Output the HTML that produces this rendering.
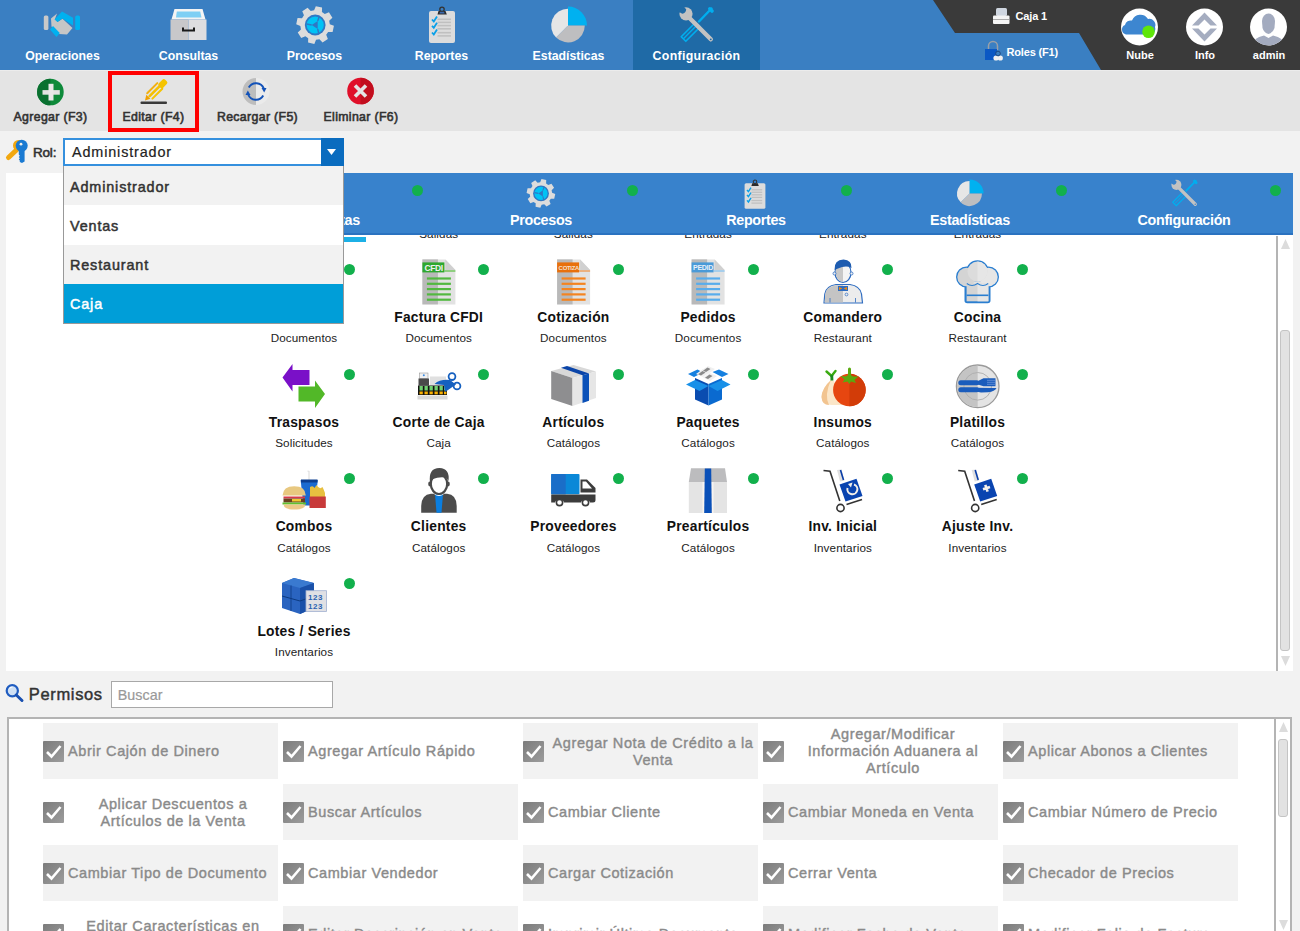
<!DOCTYPE html>
<html><head><meta charset="utf-8">
<style>
*{box-sizing:border-box;margin:0;padding:0}
html,body{width:1300px;height:931px;overflow:hidden;background:#f2f2f2;font-family:"Liberation Sans",sans-serif;position:relative}
.a{position:absolute}
svg{position:absolute;overflow:visible}
.tb{position:absolute;left:0;top:0;width:1300px;height:70px;background:#3a7fc2}
.tl{position:absolute;top:49.2px;color:#fff;font-weight:bold;font-size:12.3px;letter-spacing:0px;text-align:center;white-space:nowrap;line-height:14px}
.tbar{position:absolute;left:0;top:70px;width:1300px;height:61px;background:#e4e4e4;border-top:1px solid #ececec}
.bl{position:absolute;top:109.7px;color:#333;font-weight:normal;-webkit-text-stroke:0.6px #333;font-size:12.3px;letter-spacing:0.35px;white-space:nowrap;text-align:center;line-height:14px}
.panel{position:absolute;left:6px;top:173px;width:1287px;height:498px;background:#fff;overflow:hidden}
.inner{position:absolute;left:-6px;top:-173px;width:1300px;height:931px}
.nav{position:absolute;left:63px;top:173px;width:1230px;height:62px;background:#3882cc;border-bottom:2px solid #2a72c0}
.nl{position:absolute;top:211.7px;color:#fff;font-weight:bold;font-size:14.3px;letter-spacing:-0.3px;white-space:nowrap;text-align:center;line-height:16px;width:200px}
.dot{position:absolute;width:11px;height:11px;border-radius:50%;background:#12b04c}
.t{position:absolute;width:200px;text-align:center;font-weight:bold;font-size:13.8px;letter-spacing:0.25px;color:#111;line-height:15px;white-space:nowrap}
.s{position:absolute;width:200px;text-align:center;font-size:11.7px;letter-spacing:0.1px;color:#222;line-height:14px;white-space:nowrap}
.perm{position:absolute;left:7px;top:717px;width:1285px;height:240px;background:#fff;border:2px solid #b4b4b4;overflow:hidden}
.pinner{position:absolute;left:-9px;top:-719px;width:1300px;height:931px}
.cell{position:absolute;width:235px;height:56px}
.cell.g{background:#f2f2f2}
.cb{position:absolute;left:0;top:18px;width:21px;height:21px;background:linear-gradient(135deg,#7c7c7c,#9c9c9c);border-radius:1px}
.ct{position:absolute;left:25px;right:0;top:0;height:56px;display:flex;align-items:center;justify-content:center;text-align:center;color:#8a8a8a;font-weight:normal;-webkit-text-stroke:0.4px #8a8a8a;font-size:14.5px;letter-spacing:0.58px;line-height:17px;padding-top:1px;white-space:nowrap}
.ct.l{justify-content:flex-start;text-align:left}
.sbl{position:absolute;width:2px;background:#b4b4b4}
.thumb{position:absolute;width:10px;border:1px solid #c4c4c4;background:#e2e2e2;border-radius:3px}

.wbg{fill:var(--wbg,#1f6aa6)}

</style></head><body>
<!-- top bar -->
<div class="tb"></div>
<div class="a" style="left:633px;top:0;width:127px;height:70px;background:#1f6aa6"></div>
<svg style="left:0;top:0" width="1300" height="70"><polygon points="933,0 1300,0 1300,70 1101,70 1079,33 955,33" fill="#3a3a3a"/></svg>
<div class="tl" style="left:0;width:125px">Operaciones</div>
<div class="tl" style="left:126px;width:125px">Consultas</div>
<div class="tl" style="left:252px;width:125px">Procesos</div>
<div class="tl" style="left:379px;width:125px">Reportes</div>
<div class="tl" style="left:506px;width:125px">Estadísticas</div>
<div class="tl" style="left:633px;width:127px;letter-spacing:0.35px">Configuración</div>
<div class="a" style="left:1015.5px;top:10.2px;color:#fff;font-weight:bold;font-size:11px;letter-spacing:-0.15px;line-height:13px">Caja 1</div>
<div class="a" style="left:1006.5px;top:45.7px;color:#fff;font-weight:bold;font-size:11px;letter-spacing:-0.17px;line-height:13px">Roles (F1)</div>
<div class="tl" style="left:1110px;width:60px;font-size:11px;top:48.7px;line-height:13px">Nube</div>
<div class="tl" style="left:1175px;width:60px;font-size:11px;top:48.7px;line-height:13px">Info</div>
<div class="tl" style="left:1239px;width:60px;font-size:11px;top:48.7px;line-height:13px">admin</div>

<!-- toolbar -->
<div class="tbar"></div>
<div class="a" style="left:108px;top:71px;width:91px;height:61px;border:4px solid #f00"></div>
<div class="bl" style="left:0;width:101px">Agregar (F3)</div>
<div class="bl" style="left:104px;width:99px">Editar (F4)</div>
<div class="bl" style="left:207px;width:101px">Recargar (F5)</div>
<div class="bl" style="left:311px;width:100px">Eliminar (F6)</div>

<!-- rol -->
<div class="a" style="left:33px;top:144.5px;font-weight:normal;-webkit-text-stroke:0.6px #333;font-size:13.5px;letter-spacing:-0.2px;color:#333;line-height:15px">Rol:</div>

<!-- upper panel -->
<div class="panel"><div class="inner">
<div class="t" style="left:204.0px;top:205.3px"></div><div class="s" style="left:204.0px;top:226.8px">Salidas</div>
<div class="dot" style="left:343.5px;top:159.5px"></div>
<div class="t" style="left:338.7px;top:205.3px"></div><div class="s" style="left:338.7px;top:226.8px">Salidas</div>
<div class="dot" style="left:478.2px;top:159.5px"></div>
<div class="t" style="left:473.4px;top:205.3px"></div><div class="s" style="left:473.4px;top:226.8px">Salidas</div>
<div class="dot" style="left:612.9px;top:159.5px"></div>
<div class="t" style="left:608.1px;top:205.3px"></div><div class="s" style="left:608.1px;top:226.8px">Entradas</div>
<div class="dot" style="left:747.6px;top:159.5px"></div>
<div class="t" style="left:742.8px;top:205.3px"></div><div class="s" style="left:742.8px;top:226.8px">Entradas</div>
<div class="dot" style="left:882.3px;top:159.5px"></div>
<div class="t" style="left:877.5px;top:205.3px"></div><div class="s" style="left:877.5px;top:226.8px">Entradas</div>
<div class="dot" style="left:1017.0px;top:159.5px"></div>
<div class="t" style="left:204.0px;top:309.7px">Ventas</div><div class="s" style="left:204.0px;top:331.2px">Documentos</div>
<div class="dot" style="left:343.5px;top:263.9px"></div>
<div class="t" style="left:338.7px;top:309.7px">Factura CFDI</div><div class="s" style="left:338.7px;top:331.2px">Documentos</div>
<div class="dot" style="left:478.2px;top:263.9px"></div>
<div class="t" style="left:473.4px;top:309.7px">Cotización</div><div class="s" style="left:473.4px;top:331.2px">Documentos</div>
<div class="dot" style="left:612.9px;top:263.9px"></div>
<div class="t" style="left:608.1px;top:309.7px">Pedidos</div><div class="s" style="left:608.1px;top:331.2px">Documentos</div>
<div class="dot" style="left:747.6px;top:263.9px"></div>
<div class="t" style="left:742.8px;top:309.7px">Comandero</div><div class="s" style="left:742.8px;top:331.2px">Restaurant</div>
<div class="dot" style="left:882.3px;top:263.9px"></div>
<div class="t" style="left:877.5px;top:309.7px">Cocina</div><div class="s" style="left:877.5px;top:331.2px">Restaurant</div>
<div class="dot" style="left:1017.0px;top:263.9px"></div>
<div class="t" style="left:204.0px;top:414.5px">Traspasos</div><div class="s" style="left:204.0px;top:436.1px">Solicitudes</div>
<div class="dot" style="left:343.5px;top:368.7px"></div>
<div class="t" style="left:338.7px;top:414.5px">Corte de Caja</div><div class="s" style="left:338.7px;top:436.1px">Caja</div>
<div class="dot" style="left:478.2px;top:368.7px"></div>
<div class="t" style="left:473.4px;top:414.5px">Artículos</div><div class="s" style="left:473.4px;top:436.1px">Catálogos</div>
<div class="dot" style="left:612.9px;top:368.7px"></div>
<div class="t" style="left:608.1px;top:414.5px">Paquetes</div><div class="s" style="left:608.1px;top:436.1px">Catálogos</div>
<div class="dot" style="left:747.6px;top:368.7px"></div>
<div class="t" style="left:742.8px;top:414.5px">Insumos</div><div class="s" style="left:742.8px;top:436.1px">Catálogos</div>
<div class="dot" style="left:882.3px;top:368.7px"></div>
<div class="t" style="left:877.5px;top:414.5px">Platillos</div><div class="s" style="left:877.5px;top:436.1px">Catálogos</div>
<div class="dot" style="left:1017.0px;top:368.7px"></div>
<div class="t" style="left:204.0px;top:519.1px">Combos</div><div class="s" style="left:204.0px;top:540.6px">Catálogos</div>
<div class="dot" style="left:343.5px;top:473.3px"></div>
<div class="t" style="left:338.7px;top:519.1px">Clientes</div><div class="s" style="left:338.7px;top:540.6px">Catálogos</div>
<div class="dot" style="left:478.2px;top:473.3px"></div>
<div class="t" style="left:473.4px;top:519.1px">Proveedores</div><div class="s" style="left:473.4px;top:540.6px">Catálogos</div>
<div class="dot" style="left:612.9px;top:473.3px"></div>
<div class="t" style="left:608.1px;top:519.1px">Preartículos</div><div class="s" style="left:608.1px;top:540.6px">Catálogos</div>
<div class="dot" style="left:747.6px;top:473.3px"></div>
<div class="t" style="left:742.8px;top:519.1px">Inv. Inicial</div><div class="s" style="left:742.8px;top:540.6px">Inventarios</div>
<div class="dot" style="left:882.3px;top:473.3px"></div>
<div class="t" style="left:877.5px;top:519.1px">Ajuste Inv.</div><div class="s" style="left:877.5px;top:540.6px">Inventarios</div>
<div class="dot" style="left:1017.0px;top:473.3px"></div>
<div class="t" style="left:204.0px;top:623.6px">Lotes / Series</div><div class="s" style="left:204.0px;top:645.1px">Inventarios</div>
<div class="dot" style="left:343.5px;top:577.8px"></div>
<svg style="left:0;top:0" width="1300" height="700">
<defs>
 <g id="doc">
  <!-- doc at 0,0 size 33x45 -->
  <path d="M0 0 L23 0 L33 10.5 L33 45 L0 45 Z" fill="#e2e2e2"/>
  <rect x="0" y="0" width="15.5" height="45" fill="#b9b9b9"/>
  <path d="M23 0 L33 10.5 L23 10.5 Z" fill="#d0d0d0"/>
 </g>
</defs>
<!-- CFDI -->
<g transform="translate(422.4 259.4)">
 <use href="#doc"/>
 <rect x="0" y="3" width="22" height="10" fill="#2ea82e"/>
 <rect x="22" y="11" width="11" height="1.2" fill="#58c040"/>
 <text x="2" y="11.6" font-family="Liberation Sans" font-weight="bold" font-size="8.5" fill="#f0f0f0" letter-spacing="-0.4">CFDI</text>
 <g fill="#52b840"><rect x="4.5" y="18" width="24" height="2.2"/><rect x="4.5" y="23.3" width="24" height="2.2"/><rect x="4.5" y="28.6" width="24" height="2.2"/><rect x="4.5" y="33.9" width="24" height="2.2"/><rect x="4.5" y="39.2" width="24" height="2.2"/></g>
</g>
<!-- COTIZA -->
<g transform="translate(557.1 259.4)">
 <use href="#doc"/>
 <rect x="0" y="3" width="22" height="10" fill="#e8700c"/>
 <rect x="22" y="11" width="11" height="1.2" fill="#f09040"/>
 <text x="1.5" y="10.8" font-family="Liberation Sans" font-weight="bold" font-size="6" fill="#f4e0d0" letter-spacing="-0.3">COTIZA</text>
 <g fill="#f48420"><rect x="4.5" y="18" width="24" height="2.2"/><rect x="4.5" y="23.3" width="24" height="2.2"/><rect x="4.5" y="28.6" width="24" height="2.2"/><rect x="4.5" y="33.9" width="24" height="2.2"/><rect x="4.5" y="39.2" width="24" height="2.2"/></g>
</g>
<!-- PEDIDO -->
<g transform="translate(691.6 259.4)">
 <use href="#doc"/>
 <rect x="0" y="3" width="22" height="10" fill="#4a9ad8"/>
 <rect x="22" y="11" width="11" height="1.2" fill="#80c0f0"/>
 <text x="1.5" y="11" font-family="Liberation Sans" font-weight="bold" font-size="7" fill="#e8f0f8" letter-spacing="-0.3">PEDID</text>
 <g fill="#58acec"><rect x="4.5" y="18" width="24" height="2.2"/><rect x="4.5" y="23.3" width="24" height="2.2"/><rect x="4.5" y="28.6" width="24" height="2.2"/><rect x="4.5" y="33.9" width="24" height="2.2"/><rect x="4.5" y="39.2" width="24" height="2.2"/></g>
</g>
<!-- Comandero -->
<g>
 <path d="M824 303 L824.8 294 Q826 286 836 284.5 L850 284.5 Q860 286 861.5 294 L862.5 303 Z" fill="#ececec" stroke="#2e6cc0" stroke-width="1.2"/>
 <path d="M824.6 302.4 L825.3 294 Q826.5 286.8 836 285.2 L843 285.2 L843 302.4 Z" fill="#c4c4c4"/>
 <ellipse cx="843" cy="272.5" rx="8" ry="10" fill="#f4f4f4" stroke="#2e6cc0" stroke-width="1.2"/>
 <path d="M835.6 272.5 A7.4 9.4 0 0 1 843 263 L843 282 A7.4 9.4 0 0 1 835.6 272.5 Z" fill="#c8c8c8"/>
 <path d="M834.5 270 Q834 259.5 843.5 259.5 Q852 260 851.5 268 Q846 265 838 268.5 Z" fill="#1e5cb0"/>
 <circle cx="834.5" cy="273.5" r="1.5" fill="#f0f0f0" stroke="#2e6cc0" stroke-width="0.8"/>
 <circle cx="851.5" cy="273.5" r="1.5" fill="#f0f0f0" stroke="#2e6cc0" stroke-width="0.8"/>
 <rect x="838" y="286" width="10" height="5" fill="#2e6cc0"/>
 <path d="M839 287 L842.5 288.5 L839 290 Z M847 287 L843.5 288.5 L847 290 Z" fill="#f08a10"/>
 <circle cx="846.5" cy="294.5" r="1.4" fill="none" stroke="#2e6cc0" stroke-width="0.7"/>
 <path d="M830 298 L830 302.5 M855.5 298 L855.5 302.5" stroke="#2e6cc0" stroke-width="0.8"/>
</g>
<!-- Cocina -->
<g stroke="#2a7ed0" stroke-width="2.6">
 <circle cx="966.5" cy="277" r="9.2" fill="#d6d6d6"/>
 <circle cx="988.5" cy="277" r="9.2" fill="#e6e6e6"/>
 <circle cx="977.5" cy="271.5" r="10" fill="#dedede"/>
 <rect x="965.8" y="280" width="23.4" height="22" rx="1.5" fill="#e2e2e2"/>
</g>
<g>
 <circle cx="966.5" cy="277" r="9.2" fill="#d4d4d4"/>
 <circle cx="988.5" cy="277" r="9.2" fill="#e6e6e6"/>
 <circle cx="977.5" cy="271.5" r="10" fill="#dcdcdc"/>
 <path d="M977.5 261.5 A10 10 0 0 1 977.5 281.5 Z" fill="#e6e6e6"/>
 <rect x="966.6" y="283.5" width="21.8" height="17.8" fill="#d4d4d4"/>
 <rect x="977.5" y="283.5" width="10.9" height="17.8" fill="#e6e6e6"/>
 <path d="M966.8 283.5 Q972 287.5 977.5 283.5 Q983 287.5 988.2 283.5" fill="none" stroke="#2a7ed0" stroke-width="1.1"/>
 <rect x="966.6" y="294.5" width="21.8" height="1.6" fill="#2a7ed0"/>
</g>
<!-- Traspasos -->
<path d="M282.5 377.5 L292.5 364 L292.5 370 L309.5 370 L309.5 385 L292.5 385 L292.5 391.5 Z" fill="#7a10c8"/>
<path d="M325 394 L315 380.5 L315 386.5 L298.5 386.5 L298.5 401.5 L315 401.5 L315 408 Z" fill="#52b828"/>
<!-- Corte de caja -->
<g>
 <rect x="430" y="376.5" width="16" height="9" fill="#e0e0e0"/>
 <rect x="419.5" y="373" width="8.5" height="5.5" fill="#f0f0f0" stroke="#888" stroke-width="0.5"/>
 <circle cx="423.8" cy="375.3" r="1" fill="#3a8ae0"/>
 <rect x="418.5" y="378.5" width="10.5" height="7" fill="#4a4a4a"/>
 <rect x="418" y="385.5" width="29" height="9.5" fill="#111"/>
 <g fill="#70d070"><rect x="419.5" y="386" width="3.3" height="4.5"/><rect x="424.5" y="386" width="3.3" height="4.5"/><rect x="429.5" y="386" width="3.3" height="4.5"/><rect x="434.5" y="386" width="3.3" height="4.5"/><rect x="439.5" y="386" width="3.3" height="4.5"/><rect x="444" y="386" width="2.5" height="4.5"/></g>
 <g fill="#f8b000"><rect x="419.5" y="391.5" width="3.3" height="2.8"/><rect x="424.5" y="391.5" width="3.3" height="2.8"/><rect x="429.5" y="391.5" width="3.3" height="2.8"/><rect x="434.5" y="391.5" width="3.3" height="2.8"/><rect x="439.5" y="391.5" width="3.3" height="2.8"/><rect x="444" y="391.5" width="2.5" height="2.8"/></g>
 <rect x="417.5" y="395.5" width="30" height="4" fill="#d8d8d8"/>
 <path d="M434.5 384 Q440 379 450 380 L456 384.5 L448 390 L445 392 L444 385 Z" fill="#1560c0"/>
 <circle cx="452" cy="376.6" r="3.4" fill="none" stroke="#1560c0" stroke-width="1.8"/>
 <circle cx="457" cy="386" r="3.4" fill="none" stroke="#1560c0" stroke-width="1.8"/>
</g>
<!-- Articulos box -->
<g>
 <path d="M551.2 371 L573.5 365 L596 371.5 L572.5 378 Z" fill="#d8d8d8"/>
 <path d="M551.2 371 L572.5 378 L572.5 406 L551.2 399 Z" fill="#8e8e90"/>
 <path d="M572.5 378 L596 371.5 L596 398 L572.5 406 Z" fill="#e6e6e6"/>
 <path d="M582.5 375.2 L589 373.4 L589 400.8 L582.5 403 Z" fill="#0a50b8"/>
 <path d="M561 367.7 L567 366 L589 373.4 L582.5 375.2 Z" fill="#0a44a8"/>
</g>
<!-- Paquetes -->
<g>
 <path d="M695 378 L708.5 384 L708.5 405.5 L695 399.5 Z" fill="#0a4cb0"/>
 <path d="M708.5 384 L722 378 L722 399.5 L708.5 405.5 Z" fill="#0a6ad0"/>
 <path d="M688 374 L697.5 369.5 L703 372.5 L694 377 Z" fill="#1680e0"/>
 <path d="M712.5 372 L719 369.5 L728.5 374 L722 377 Z" fill="#1680e0"/>
 <path d="M696 374 L703 369 L710 372 L703 377 Z" fill="#f0f0f0"/>
 <path d="M701 370.5 L708 366 L715 369 L708 374 Z" fill="#f0f0f0"/>
 <path d="M703 377.5 L710 373 L717 376 L710 381 Z" fill="#f0f0f0"/>
 <path d="M698 374.2 L702.5 371 L705.5 372.4 L701 375.6 Z M703 370.7 L707.5 367.5 L710.5 368.9 L706 372.1 Z M705 377.7 L709.5 374.5 L712.5 375.9 L708 379.1 Z" fill="#8a8a8a"/>
 <path d="M686 384.5 L695 380 L708.5 386 L699.5 391 Z" fill="#1890e8"/>
 <path d="M708.5 386 L722 380 L730.5 384.5 L717.5 391 Z" fill="#1890e8"/>
</g>
<!-- Insumos -->
<g>
 <path d="M831 380 Q822 388 821.5 397 Q822 405 832 405 L844 405 Q840 392 834 381 Z" fill="#fbe6c8"/>
 <path d="M831 380 Q822 388 821.5 397 Q822 405 829 405 Q824 395 831 380 Z" fill="#f2c490"/>
 <path d="M826.5 371.5 L831.5 376 L835.5 371" fill="none" stroke="#3aaa10" stroke-width="2.4" stroke-linecap="round"/><path d="M830.3 375 L833.2 375 L833.4 380.5 L830.5 380.5 Z" fill="#1e8a20"/>
 <circle cx="849.4" cy="390" r="16.3" fill="#e64610"/>
 <path d="M849.4 373.7 A16.3 16.3 0 0 1 849.4 406.3 Z" fill="#d23c08"/>
 <path d="M840.5 376 L846 376.5 L849.4 374 L853 376.5 L858.5 376.5 L854.5 380 L856 383 L851 381.5 L849.4 384 L847.5 381.5 L842.5 382.5 L844.5 379.5 Z" fill="#5aaa10"/>
 <rect x="848" y="367.5" width="3" height="9" rx="1.5" fill="#5aaa10"/>
</g>
<!-- Platillos -->
<g>
 <circle cx="977.7" cy="386.3" r="21.3" fill="#e4e4e4" stroke="#9a9a9a" stroke-width="1.3"/>
 <path d="M977.7 365.6 A20.7 20.7 0 0 0 977.7 407 Z" fill="#c4c4c4"/>
 <circle cx="977.7" cy="386.3" r="13.8" fill="none" stroke="#adadad" stroke-width="0.9"/>
 <rect x="958.3" y="380.2" width="21" height="5" rx="2.5" fill="#1a5cbc"/>
 <path d="M978 381 L983.5 378.3 L995.5 378.3 L995.5 386.3 L983.5 386.3 L978 384.5 Z" fill="#1a5cbc"/>
 <path d="M987 380.3 L995.5 380.3 M987 382.3 L995.5 382.3 M987 384.3 L995.5 384.3" stroke="#7aa0e0" stroke-width="0.7"/>
 <rect x="958.3" y="387.3" width="21" height="5" rx="2.5" fill="#1a5cbc"/>
 <path d="M977 387.8 L996.5 388 Q995 391.5 988 392.3 L981 392.6 L977 391.8 Z" fill="#1a5cbc"/>
</g>
<!-- Combos -->
<g>
 <path d="M307.5 471 L309 471.5 L309 480" stroke="#e0e0e0" stroke-width="1.2" fill="none"/>
 <path d="M300.6 480 L317.8 480 L315 505.5 L303.5 505.5 Z" fill="#1a6ad0"/>
 <rect x="301" y="479.5" width="16.5" height="3" fill="#0c3e90"/>
 <path d="M310 487 Q313 485 314.5 488 L316.5 485 Q319.5 490 322.5 487 Q324 490 325 493 L325 497 L310 497 Z" fill="#e8c040"/>
 <rect x="309.5" y="496.5" width="16.3" height="11.5" fill="#c83a3a"/>
 <path d="M282.5 495.5 Q283 486.2 294.2 486.2 Q305.5 486.2 305.8 495.5 Z" fill="#e8c880"/>
 <rect x="283.5" y="496.5" width="21.5" height="2" fill="#d83a4a"/>
 <rect x="283.5" y="498.5" width="21.5" height="4" fill="#6a4020"/>
 <rect x="292" y="499" width="9" height="2.5" fill="#f0c830"/>
 <rect x="282.5" y="502.5" width="23.5" height="2" fill="#60c030"/>
 <path d="M283.5 504.5 L305.5 504.5 Q305 509.6 294.2 509.6 Q284 509.6 283.5 504.5 Z" fill="#ecc888"/>
</g>
<!-- Clientes -->
<g>
 <path d="M421.2 512.7 L421.2 506 Q421.5 494.5 431 493.8 L447 493.8 Q456.5 494.5 456.7 506 L456.7 512.7 Z" fill="#4c4c4c"/>
 <path d="M435 494 L443 494 L441.5 512.7 L436.5 512.7 Z" fill="#0a7ee0"/>
 <path d="M434 493.5 Q439 497.5 444 493.5" stroke="#fff" stroke-width="1" fill="none"/>
 <ellipse cx="439" cy="484" rx="8.2" ry="10" fill="#fff" stroke="#4a4a4a" stroke-width="2.2"/>
 <path d="M430 483 Q428 468 439.5 468 Q450 468.5 448.5 481 L446.5 478 Q441 476 431.5 479.5 Z" fill="#4a4a4a"/>
 <ellipse cx="429.8" cy="484" rx="1.6" ry="2.4" fill="#4a4a4a"/>
 <ellipse cx="448.2" cy="484" rx="1.6" ry="2.4" fill="#4a4a4a"/>
</g>
<!-- Proveedores -->
<g>
 <rect x="551.2" y="474.1" width="28.3" height="20.2" rx="1" fill="#0a88d8"/>
 <rect x="551.2" y="474.1" width="14.5" height="20.2" fill="#1a6ec8"/>
 <path d="M580.5 479.5 L587 479.5 L595.5 488 L595.5 492.5 L580.5 492.5 Z" fill="#3c3c3c"/>
 <path d="M582.5 481.5 L586 481.5 L592 488.5 L582.5 488.5 Z" fill="#fff"/>
 <path d="M551.2 494.5 L595.5 494.5 L595.5 500 Q595.5 502.5 593 502.5 L590 502.5 A4.8 4.8 0 0 0 581 502.5 L564 502.5 A4.8 4.8 0 0 0 555 502.5 L551.2 502.5 Z" fill="#3c3c3c"/>
 <circle cx="559.5" cy="502.5" r="3.1" fill="#fff" stroke="#3c3c3c" stroke-width="1.6"/>
 <circle cx="585.5" cy="502.5" r="3.1" fill="#fff" stroke="#3c3c3c" stroke-width="1.6"/>
</g>
<!-- Prearticulos -->
<g>
 <path d="M691 468.2 L725 468.2 L727 482 L688.8 482 Z" fill="#bcbcbe"/>
 <rect x="688.8" y="482" width="38.2" height="31" fill="#e4e4e4"/>
 <rect x="702.5" y="482" width="11" height="31" fill="#f8f4f0"/>
 <path d="M704.8 468.5 L711.2 468.5 L711.8 513 L704.2 513 Z" fill="#0a50b8"/>
</g>
<!-- Inv inicial / ajuste -->
<g id="cart1">
 <path d="M837 470 L841.5 469.5 L844.5 480.5 L840 481.5 Z" fill="#e0e0e0"/>
 <path d="M840.5 470 L843.5 480" stroke="#0a3ea8" stroke-width="1.6"/>
 <path d="M823.5 470.5 L830 471.3 L839.8 501" fill="none" stroke="#333" stroke-width="1.6"/>
 <circle cx="840.5" cy="508" r="3.6" fill="none" stroke="#333" stroke-width="1.6"/>
 <path d="M846.5 504.5 L862 499.5" stroke="#333" stroke-width="1.6"/>
 <path d="M839.5 484.5 L856.5 478.8 L862.5 496 L845.5 501.5 Z" fill="#0a44b0"/>
</g>
<path d="M847.5 488 A5 5 0 1 0 854 484.5" fill="none" stroke="#f4f0ea" stroke-width="2"/>
<path d="M848 484 L852.5 482.5 L851 487.5 Z" fill="#f4f0ea"/>
<use href="#cart1" transform="translate(134.7 0)"/>
<path d="M983 489.3 L990 487 M985.3 484.8 L987.6 491.7" stroke="#f4f0ea" stroke-width="2.6"/>
<!-- Lotes -->
<g>
 <path d="M282 583 L294 578 L313.9 583 L313.9 608 L300 614 L282 608 Z" fill="#2a64c0"/>
 <path d="M282 583 L294 578 L313.9 583 L300 588 Z" fill="#3a7ad0"/>
 <path d="M300 588 L313.9 583 L313.9 608 L300 614 Z" fill="#1a50a8"/>
 <path d="M282 596 L300 601 L313.9 596" fill="none" stroke="#0c3a80" stroke-width="1"/>
 <path d="M291 585.5 L291 611" stroke="#0c3a80" stroke-width="0.8"/>
 <rect x="306" y="590.7" width="20.5" height="20.7" fill="#e0e0e4" stroke="#a0b0d0" stroke-width="0.8"/>
 <text x="308" y="599.5" font-family="Liberation Sans" font-weight="bold" font-size="8" fill="#2a60b0" letter-spacing="0.6">123</text>
 <text x="308" y="608.5" font-family="Liberation Sans" font-weight="bold" font-size="8" fill="#2a60b0" letter-spacing="0.6">123</text>
</g>
</svg>

<div class="nav"></div>
<div class="a" style="left:287px;top:236.5px;width:79px;height:5px;background:#1cb0e6"></div>
<svg style="left:0;top:0" width="1300" height="240">
 <g transform="translate(541 193) scale(0.76)">
  <path d="M-3.2 -18 L3.2 -18 L4 -13.6 L7.2 -12.3 L10.9 -14.8 L15.4 -10.3 L12.9 -6.6 L14.2 -3.4 L18.6 -2.6 L18.6 3.8 L14.2 4.6 L12.9 7.8 L15.4 11.5 L10.9 16 L7.2 13.5 L4 14.8 L3.2 19.2 L-3.2 19.2 L-4 14.8 L-7.2 13.5 L-10.9 16 L-15.4 11.5 L-12.9 7.8 L-14.2 4.6 L-18.6 3.8 L-18.6 -2.6 L-14.2 -3.4 L-12.9 -6.6 L-15.4 -10.3 L-10.9 -14.8 L-7.2 -12.3 L-4 -13.6 Z" fill="#dcdcdc" transform="rotate(12)"/>
  <circle cx="0" cy="0.5" r="10.4" fill="#2f78c4"/>
  <circle cx="0" cy="0.5" r="8.6" fill="#00c3f5"/>
  <path d="M-3.5 0.5 L2.5 -3.5 L2.5 4.5 Z" fill="#2f78c4"/><path d="M-8.6 -0.5 L-3.5 0.5 M2.5 -3.5 L4 -8 M2.5 4.5 L3.5 9" stroke="#2f78c4" stroke-width="1.4"/>
 </g>
 <!-- clipboard small -->
 <g transform="translate(744.6 179.4) scale(0.8)">
  <rect x="0" y="4.7" width="26" height="32" rx="2" fill="#dcdcdc"/>
  <circle cx="13" cy="3" r="2.2" fill="none" stroke="#333" stroke-width="1.3"/><path d="M8.5 8.2 L9.5 4.7 L16.5 4.7 L17.8 8.2 Z" fill="#2c2c2c"/>
  <g fill="#c0c0c0"><rect x="8.5" y="12.2" width="13.5" height="1.6"/><rect x="8.5" y="15.3" width="13.5" height="1.6"/><rect x="8.5" y="18.5" width="13.5" height="1.6"/><rect x="8.5" y="21.7" width="13.5" height="1.6"/><rect x="8.5" y="25.6" width="13.5" height="1.6"/><rect x="8.5" y="28.8" width="13.5" height="1.6"/></g>
  <g fill="none" stroke="#0aa0e8" stroke-width="1.8"><path d="M3 13.2 L4.8 15.3 L8 10.2"/><path d="M3 19.5 L4.8 21.5 L8 16.5"/><path d="M3 26.2 L4.8 28.2 L8 23.2"/></g>
 </g>
 <!-- pie small -->
 <g transform="translate(969.5 193.5) scale(0.74)">
  <path d="M0 0 L0 -19 A19 19 0 0 1 19 0 Z" fill="#00b1f0"/>
  <path d="M0 0 L16.8 0 A16.8 16.8 0 0 1 -11.9 11.9 Z" fill="#bebec0"/>
  <path d="M0 0 L-11.9 11.9 A16.8 16.8 0 0 1 0 -16.8 Z" fill="#e6e6e6"/>
 </g>
 <!-- wrench small -->
 <g transform="translate(1184 193) scale(0.76) translate(-696 -24.5)" style="--wbg:#3882cc">
 <use href="#wrenchg"/>
 </g>
</svg>

<div class="nl" style="left:226.6px">Consultas</div>
<div class="nl" style="left:441px">Procesos</div>
<div class="nl" style="left:656px">Reportes</div>
<div class="nl" style="left:870px">Estadísticas</div>
<div class="nl" style="left:1084px">Configuración</div>
<div class="dot" style="left:411.5px;top:184.5px"></div>
<div class="dot" style="left:626.5px;top:184.5px"></div>
<div class="dot" style="left:840.5px;top:184.5px"></div>
<div class="dot" style="left:1055.5px;top:184.5px"></div>
<div class="dot" style="left:1269.5px;top:184.5px"></div>
<div class="sbl" style="left:1276px;top:236px;height:435px"></div>
<svg style="left:1281px;top:239px" width="9" height="10"><polygon points="4.5,0 9,10 0,10" fill="#dcdcdc"/></svg>
<svg style="left:1281px;top:656px" width="9" height="10"><polygon points="0,0 9,0 4.5,10" fill="#dcdcdc"/></svg>
<div class="thumb" style="left:1280px;top:330px;height:321px"></div>
</div></div>

<!-- combo -->
<div class="a" style="left:63px;top:138px;width:281px;height:28px;background:#fff;border:2px solid #3590de"></div>
<div class="a" style="left:321px;top:138px;width:23px;height:28px;background:#0a6cbf"></div>
<svg style="left:327px;top:149px" width="9" height="6"><polygon points="0,0 9,0 4.5,6" fill="#fff"/></svg>
<div class="a" style="left:72px;top:144px;font-size:14.4px;letter-spacing:0.86px;color:#222;line-height:16px;-webkit-text-stroke:0.2px #222">Administrador</div>
<div class="a" style="left:63px;top:166px;width:281px;height:158px;background:#fff;border:1px solid #999;border-top:none">
  <div class="a" style="left:0;top:0;width:279px;height:39px;background:#f2f2f2"></div>
  <div class="a" style="left:0;top:79px;width:279px;height:39px;background:#f2f2f2"></div>
  <div class="a" style="left:0;top:118px;width:279px;height:39px;background:#009ed8"></div>
</div>
<div class="a" style="left:70px;top:178.5px;font-size:14.4px;font-weight:normal;-webkit-text-stroke:0.5px #333;letter-spacing:0.86px;color:#333;line-height:16px">Administrador</div>
<div class="a" style="left:70px;top:217.5px;font-size:14.4px;font-weight:normal;-webkit-text-stroke:0.5px #333;letter-spacing:0.86px;color:#333;line-height:16px">Ventas</div>
<div class="a" style="left:70px;top:256.5px;font-size:14.4px;font-weight:normal;-webkit-text-stroke:0.5px #333;letter-spacing:0.86px;color:#333;line-height:16px">Restaurant</div>
<div class="a" style="left:70px;top:295.5px;font-size:14.4px;font-weight:normal;-webkit-text-stroke:0.5px #fff;letter-spacing:0.86px;color:#fff;line-height:16px">Caja</div>

<!-- permisos -->
<div class="a" style="left:28.8px;top:685.3px;font-size:16.5px;font-weight:normal;-webkit-text-stroke:0.45px #333;letter-spacing:0.65px;color:#333;line-height:18px">Permisos</div>
<div class="a" style="left:111px;top:681px;width:222px;height:27px;background:#fff;border:1px solid #a8a8a8"></div>
<div class="a" style="left:117.7px;top:687px;font-size:14.3px;letter-spacing:0.08px;color:#999;line-height:16px;-webkit-text-stroke:0.2px #999">Buscar</div>

<div class="perm"><div class="pinner">
<div class="cell g" style="left:43px;top:723px"><div class="cb"><svg style="left:0;top:0" width="21" height="21" viewBox="0 0 21 21"><path d="M4 11 L8.5 15.5 L17.5 5" fill="none" stroke="#fff" stroke-width="2.6"/></svg>
</div><div class="ct l">Abrir Cajón de Dinero</div></div>
<div class="cell" style="left:283px;top:723px"><div class="cb"><svg style="left:0;top:0" width="21" height="21" viewBox="0 0 21 21"><path d="M4 11 L8.5 15.5 L17.5 5" fill="none" stroke="#fff" stroke-width="2.6"/></svg>
</div><div class="ct l">Agregar Artículo Rápido</div></div>
<div class="cell g" style="left:523px;top:723px"><div class="cb"><svg style="left:0;top:0" width="21" height="21" viewBox="0 0 21 21"><path d="M4 11 L8.5 15.5 L17.5 5" fill="none" stroke="#fff" stroke-width="2.6"/></svg>
</div><div class="ct">Agregar Nota de Crédito a la<br>Venta</div></div>
<div class="cell" style="left:763px;top:723px"><div class="cb"><svg style="left:0;top:0" width="21" height="21" viewBox="0 0 21 21"><path d="M4 11 L8.5 15.5 L17.5 5" fill="none" stroke="#fff" stroke-width="2.6"/></svg>
</div><div class="ct">Agregar/Modificar<br>Información Aduanera al<br>Artículo</div></div>
<div class="cell g" style="left:1003px;top:723px"><div class="cb"><svg style="left:0;top:0" width="21" height="21" viewBox="0 0 21 21"><path d="M4 11 L8.5 15.5 L17.5 5" fill="none" stroke="#fff" stroke-width="2.6"/></svg>
</div><div class="ct l">Aplicar Abonos a Clientes</div></div>
<div class="cell" style="left:43px;top:784px"><div class="cb"><svg style="left:0;top:0" width="21" height="21" viewBox="0 0 21 21"><path d="M4 11 L8.5 15.5 L17.5 5" fill="none" stroke="#fff" stroke-width="2.6"/></svg>
</div><div class="ct">Aplicar Descuentos a<br>Artículos de la Venta</div></div>
<div class="cell g" style="left:283px;top:784px"><div class="cb"><svg style="left:0;top:0" width="21" height="21" viewBox="0 0 21 21"><path d="M4 11 L8.5 15.5 L17.5 5" fill="none" stroke="#fff" stroke-width="2.6"/></svg>
</div><div class="ct l">Buscar Artículos</div></div>
<div class="cell" style="left:523px;top:784px"><div class="cb"><svg style="left:0;top:0" width="21" height="21" viewBox="0 0 21 21"><path d="M4 11 L8.5 15.5 L17.5 5" fill="none" stroke="#fff" stroke-width="2.6"/></svg>
</div><div class="ct l">Cambiar Cliente</div></div>
<div class="cell g" style="left:763px;top:784px"><div class="cb"><svg style="left:0;top:0" width="21" height="21" viewBox="0 0 21 21"><path d="M4 11 L8.5 15.5 L17.5 5" fill="none" stroke="#fff" stroke-width="2.6"/></svg>
</div><div class="ct l">Cambiar Moneda en Venta</div></div>
<div class="cell" style="left:1003px;top:784px"><div class="cb"><svg style="left:0;top:0" width="21" height="21" viewBox="0 0 21 21"><path d="M4 11 L8.5 15.5 L17.5 5" fill="none" stroke="#fff" stroke-width="2.6"/></svg>
</div><div class="ct l">Cambiar Número de Precio</div></div>
<div class="cell g" style="left:43px;top:845px"><div class="cb"><svg style="left:0;top:0" width="21" height="21" viewBox="0 0 21 21"><path d="M4 11 L8.5 15.5 L17.5 5" fill="none" stroke="#fff" stroke-width="2.6"/></svg>
</div><div class="ct l">Cambiar Tipo de Documento</div></div>
<div class="cell" style="left:283px;top:845px"><div class="cb"><svg style="left:0;top:0" width="21" height="21" viewBox="0 0 21 21"><path d="M4 11 L8.5 15.5 L17.5 5" fill="none" stroke="#fff" stroke-width="2.6"/></svg>
</div><div class="ct l">Cambiar Vendedor</div></div>
<div class="cell g" style="left:523px;top:845px"><div class="cb"><svg style="left:0;top:0" width="21" height="21" viewBox="0 0 21 21"><path d="M4 11 L8.5 15.5 L17.5 5" fill="none" stroke="#fff" stroke-width="2.6"/></svg>
</div><div class="ct l">Cargar Cotización</div></div>
<div class="cell" style="left:763px;top:845px"><div class="cb"><svg style="left:0;top:0" width="21" height="21" viewBox="0 0 21 21"><path d="M4 11 L8.5 15.5 L17.5 5" fill="none" stroke="#fff" stroke-width="2.6"/></svg>
</div><div class="ct l">Cerrar Venta</div></div>
<div class="cell g" style="left:1003px;top:845px"><div class="cb"><svg style="left:0;top:0" width="21" height="21" viewBox="0 0 21 21"><path d="M4 11 L8.5 15.5 L17.5 5" fill="none" stroke="#fff" stroke-width="2.6"/></svg>
</div><div class="ct l">Checador de Precios</div></div>
<div class="cell" style="left:43px;top:906px"><div class="cb"><svg style="left:0;top:0" width="21" height="21" viewBox="0 0 21 21"><path d="M4 11 L8.5 15.5 L17.5 5" fill="none" stroke="#fff" stroke-width="2.6"/></svg>
</div><div class="ct">Editar Características en<br>Venta</div></div>
<div class="cell g" style="left:283px;top:906px"><div class="cb"><svg style="left:0;top:0" width="21" height="21" viewBox="0 0 21 21"><path d="M4 11 L8.5 15.5 L17.5 5" fill="none" stroke="#fff" stroke-width="2.6"/></svg>
</div><div class="ct l">Editar Descripción en Venta</div></div>
<div class="cell" style="left:523px;top:906px"><div class="cb"><svg style="left:0;top:0" width="21" height="21" viewBox="0 0 21 21"><path d="M4 11 L8.5 15.5 L17.5 5" fill="none" stroke="#fff" stroke-width="2.6"/></svg>
</div><div class="ct l">Imprimir Último Documento</div></div>
<div class="cell g" style="left:763px;top:906px"><div class="cb"><svg style="left:0;top:0" width="21" height="21" viewBox="0 0 21 21"><path d="M4 11 L8.5 15.5 L17.5 5" fill="none" stroke="#fff" stroke-width="2.6"/></svg>
</div><div class="ct l">Modificar Fecha de Venta</div></div>
<div class="cell" style="left:1003px;top:906px"><div class="cb"><svg style="left:0;top:0" width="21" height="21" viewBox="0 0 21 21"><path d="M4 11 L8.5 15.5 L17.5 5" fill="none" stroke="#fff" stroke-width="2.6"/></svg>
</div><div class="ct l">Modificar Folio de Factura</div></div>
<div class="sbl" style="left:1274px;top:719px;height:220px"></div>
<svg style="left:1279px;top:722px" width="9" height="10"><polygon points="4.5,0 9,10 0,10" fill="#dcdcdc"/></svg>
<svg style="left:1279px;top:920px" width="9" height="10"><polygon points="0,0 9,0 4.5,10" fill="#dcdcdc"/></svg>
<div class="thumb" style="left:1278px;top:739px;height:78px"></div>
</div></div>

<!-- ICONS: top bar -->
<svg style="left:0;top:0" width="1300" height="140">
 <!-- handshake -->
 <rect x="43.8" y="15.5" width="4.6" height="14.5" rx="1.6" fill="#c9c9c9"/>
 <rect x="75.2" y="15.5" width="4.8" height="14.5" rx="1.6" fill="#00b1f0"/>
 <path d="M51 18.5 L57 13.5 L55 19 L57.5 22 L62.5 18.8 L72.5 28 L67 34.5 L59 34 L51.5 26.5 Z" fill="#c6c6c6"/>
 <path d="M54.5 19.5 L62 11.5 L73 17.8 L73 25.5 L62.5 18.5 L57.5 22 Z" fill="#00b1f0"/>
 <path d="M50 29.5 L53 26 L59.8 33 L56.5 37 Z" fill="#00b1f0"/>
 <!-- drawer -->
 <path d="M174.5 9 L202.5 9 L205.5 19.5 L171.5 19.5 Z" fill="#f4f4f4"/>
 <path d="M176.8 11.5 L200.2 11.5 L201.5 17.5 L176 17.5 Z" fill="#7ecff4"/>
 <rect x="170.5" y="19.5" width="18" height="20.5" fill="#c8c8ca"/>
 <rect x="188.5" y="19.5" width="18" height="20.5" fill="#dedee0"/>
 <path d="M183 27.5 L183 30.5 L194 30.5 L194 27.5" fill="none" stroke="#1a1a1a" stroke-width="2"/>
 <!-- gear -->
 <g transform="translate(315.2 24.5)">
  <path id="gearp" d="M-3.2 -18 L3.2 -18 L4 -13.6 L7.2 -12.3 L10.9 -14.8 L15.4 -10.3 L12.9 -6.6 L14.2 -3.4 L18.6 -2.6 L18.6 3.8 L14.2 4.6 L12.9 7.8 L15.4 11.5 L10.9 16 L7.2 13.5 L4 14.8 L3.2 19.2 L-3.2 19.2 L-4 14.8 L-7.2 13.5 L-10.9 16 L-15.4 11.5 L-12.9 7.8 L-14.2 4.6 L-18.6 3.8 L-18.6 -2.6 L-14.2 -3.4 L-12.9 -6.6 L-15.4 -10.3 L-10.9 -14.8 L-7.2 -12.3 L-4 -13.6 Z" fill="#dcdcdc" transform="rotate(12)"/>
  <circle cx="0" cy="0.5" r="10.4" fill="#2f78c4"/>
  <circle cx="0" cy="0.5" r="8.6" fill="#00c3f5"/>
  <path d="M-3.5 0.5 L2.5 -3.5 L2.5 4.5 Z" fill="#2f78c4"/><path d="M-8.6 -0.5 L-3.5 0.5 M2.5 -3.5 L4 -8 M2.5 4.5 L3.5 9" stroke="#2f78c4" stroke-width="1.4"/>
 </g>
 <!-- clipboard -->
 <rect x="429" y="11" width="26" height="32" rx="2" fill="#dcdcdc"/>
 <circle cx="442" cy="9.3" r="2.2" fill="none" stroke="#333" stroke-width="1.3"/><path d="M437.5 14.5 L438.5 11 L445.5 11 L446.8 14.5 Z" fill="#2c2c2c"/><path d="M439.5 13.5 L440 11.8 L444 11.8 L444.6 13.5 Z" fill="#3a6ab0"/>
 <g fill="#c0c0c0"><rect x="437.5" y="18.5" width="13.5" height="1.6"/><rect x="437.5" y="21.6" width="13.5" height="1.6"/><rect x="437.5" y="24.8" width="13.5" height="1.6"/><rect x="437.5" y="28" width="13.5" height="1.6"/><rect x="437.5" y="31.9" width="13.5" height="1.6"/><rect x="437.5" y="35.1" width="13.5" height="1.6"/></g>
 <g fill="none" stroke="#0aa0e8" stroke-width="1.8"><path d="M432 19.5 L433.8 21.6 L437 16.5"/><path d="M432 25.8 L433.8 27.8 L437 22.8"/><path d="M432 32.5 L433.8 34.5 L437 29.5"/></g>
 <!-- pie -->
 <path d="M568 25.6 L568 6.6 A19 19 0 0 1 587 25.6 Z" fill="#00b1f0"/>
 <path d="M568 25.6 L584.8 25.6 A16.8 16.8 0 0 1 556.1 37.5 Z" fill="#bebec0"/>
 <path d="M568 25.6 L556.1 37.5 A16.8 16.8 0 0 1 568 8.8 Z" fill="#e6e6e6"/>
 <!-- wrench & screwdriver -->
 <g id="wrenchg">
 <path d="M711.5 8.5 L699 21.5" stroke="#00aeef" stroke-width="2.4" stroke-linecap="round"/>
 <path d="M709.8 8.8 L712 11" stroke="#00aeef" stroke-width="3.6" stroke-linecap="round"/>
 <path d="M700.3 26.8 L695.7 22.2 L681.2 36.7 L685.8 41.3 Z" fill="none" stroke="#00aeef" stroke-width="1.6" stroke-linejoin="round"/>
 <path d="M697.8 24.3 L683.4 38.8" stroke="#00aeef" stroke-width="1.3"/>
 <path d="M689 17.5 L710.8 39.3" stroke="#c2c2c2" stroke-width="4.4" stroke-linecap="round"/>
 <circle cx="686" cy="13.8" r="6.6" fill="#c2c2c2"/>
 <path d="M676.5 10.5 L682 5 L686.2 9.3 Q686 13.2 682.3 13.8 Z" class="wbg"/>
 <circle cx="710.8" cy="39.3" r="0.9" class="wbg"/>
 </g>
 <!-- caja 1 icon -->
 <rect x="996" y="8" width="11" height="8" rx="1.5" fill="#cfd6e0"/>
 <rect x="993" y="15.5" width="16.5" height="8.5" rx="1" fill="#f4f4f4"/>
 <rect x="993" y="19.2" width="16.5" height="0.8" fill="#9a9a9a"/>
 <!-- roles icon -->
 <path d="M988.5 50 L988.5 46 A4.5 4.5 0 0 1 997.5 46 L997.5 50" fill="none" stroke="#9aa0a8" stroke-width="1.5"/>
 <rect x="985" y="49" width="12" height="11" fill="#0b58c4"/>
 <circle cx="996" cy="58" r="2.6" fill="#f0f0f0"/><circle cx="1000.3" cy="58" r="2.6" fill="#f0f0f0"/>
 <circle cx="998" cy="53.5" r="2.3" fill="#3a7fc2" stroke="#1c3f70" stroke-width="0.8"/>
 <!-- nube / info / admin -->
 <circle cx="1139.5" cy="27" r="18.5" fill="#fff"/>
 <circle cx="1204.5" cy="27" r="18.5" fill="#fff"/>
 <circle cx="1268.5" cy="27" r="18.5" fill="#fff"/>
 <path d="M1126 34.5 A5 5 0 0 1 1125 25 A6 6 0 0 1 1132 20.5 A9 9 0 0 1 1148 19 A6 6 0 0 1 1155 27 A6 6 0 0 1 1152 34.5 Z" fill="#3d86d0"/>
 <circle cx="1148.5" cy="31.7" r="6.3" fill="#5fe60a"/>
 <path d="M1204.5 12.5 L1217 25.5 L1210.5 25.5 L1204.5 19.5 L1198.5 25.5 L1192 25.5 Z" fill="#a5adc0"/>
 <path d="M1204.5 41.5 L1217 28.5 L1210.5 28.5 L1204.5 34.5 L1198.5 28.5 L1192 28.5 Z" fill="#a5adc0"/>
 <clipPath id="admclip"><circle cx="1268.5" cy="27" r="18.3"/></clipPath>
 <g clip-path="url(#admclip)" fill="#a3abbf">
  <path d="M1262 21 A6.5 7.5 0 0 1 1275 21 L1274.5 28 Q1273 33 1268.5 34 Q1264 33 1262.5 28 Z"/>
  <path d="M1250 48 Q1252 38 1264 35.5 L1268.5 38 L1273 35.5 Q1285 38 1287 48 Z"/>
 </g>
 <!-- toolbar: agregar -->
 <circle cx="50.4" cy="92" r="13.3" fill="#0e8a3a"/>
 <path d="M50.4 78.7 A13.3 13.3 0 0 0 50.4 105.3 Z" fill="#0a7030"/>
 <rect x="42.5" y="90.1" width="17.3" height="4.6" fill="#e2e2e2"/>
 <rect x="48.5" y="83.8" width="5" height="16.7" fill="#e8e8e8"/>
 <!-- editar -->
 <rect x="140.5" y="101.6" width="26.5" height="2.4" rx="1" fill="#3a3a3a"/>
 <rect x="158.3" y="80.6" width="9" height="6.2" rx="2" fill="#f5c400" transform="rotate(-45 162.8 83.7)"/>
 <path d="M147.2 93.2 L157.3 83.1" stroke="#f2b010" stroke-width="2" stroke-linecap="round"/>
 <path d="M149.6 96.2 L159.9 85.9" stroke="#f5c000" stroke-width="2.6" stroke-linecap="round"/>
 <path d="M152.4 98.6 L162.3 88.7" stroke="#f5c400" stroke-width="2" stroke-linecap="round"/>
 <path d="M145 100.6 L146.3 94.8 L150.3 98.8 Z" fill="#f0a000"/>
 <!-- recargar -->
 <path d="M256 78 A13.5 13.5 0 0 0 256 105 Z" fill="#bdbdbd"/>
 <path d="M256 78 A13.5 13.5 0 0 1 256 105 Z" fill="#ebebeb"/>
 <path d="M248.8 87.5 A8.3 8.3 0 0 1 263.8 88.5" fill="none" stroke="#1352b8" stroke-width="2"/>
 <path d="M263.2 95.5 A8.3 8.3 0 0 1 248.2 94.5" fill="none" stroke="#1352b8" stroke-width="2"/>
 <path d="M261.5 88 L266.5 88 L264.2 92.5 Z" fill="#1352b8"/>
 <path d="M250.5 95 L245.5 95 L247.8 90.5 Z" fill="#1352b8"/>
 <!-- eliminar -->
 <circle cx="360.5" cy="91" r="13.3" fill="#e0102a"/>
 <path d="M360.5 77.7 A13.3 13.3 0 0 1 360.5 104.3 Z" fill="#c20e1e"/>
 <path d="M355 85.5 L366 96.5 M366 85.5 L355 96.5" stroke="#e4e4e4" stroke-width="3.6"/>
 <!-- key -->
 <path d="M8 133" fill="none"/>
</svg>
<svg style="left:0;top:130" width="140" height="50">
 <path d="M17 19.5 L8.5 27.5" stroke="#f2a810" stroke-width="5" stroke-linecap="round"/>
 <circle cx="18.5" cy="15.5" r="5.5" fill="#f2a810"/>
 <circle cx="21.7" cy="15.7" r="6" fill="#1a7ad2"/>
 <circle cx="21" cy="14.2" r="1.4" fill="#f4f0e8"/>
 <path d="M18.8 19 L24.6 19 L24.6 31.5 L22 33 L19.8 32 L19.8 30.5 L18.8 29.5 L19.8 28.3 L18.8 27 L19.8 25.8 L18.8 24.5 Z" fill="#1a7ad2"/>
</svg>
<!-- magnifier -->
<svg style="left:0;top:680" width="30" height="30">
 <circle cx="12.3" cy="10.8" r="5.6" fill="#cfe0f4" stroke="#1f5cc0" stroke-width="2.2"/><path d="M9.5 8.5 A3.5 3.5 0 0 1 12.5 7" stroke="#fff" stroke-width="1.2" fill="none"/>
 <path d="M16.3 15 L22 20.5" stroke="#1a50b0" stroke-width="3" stroke-linecap="round"/>
</svg>

</body></html>
